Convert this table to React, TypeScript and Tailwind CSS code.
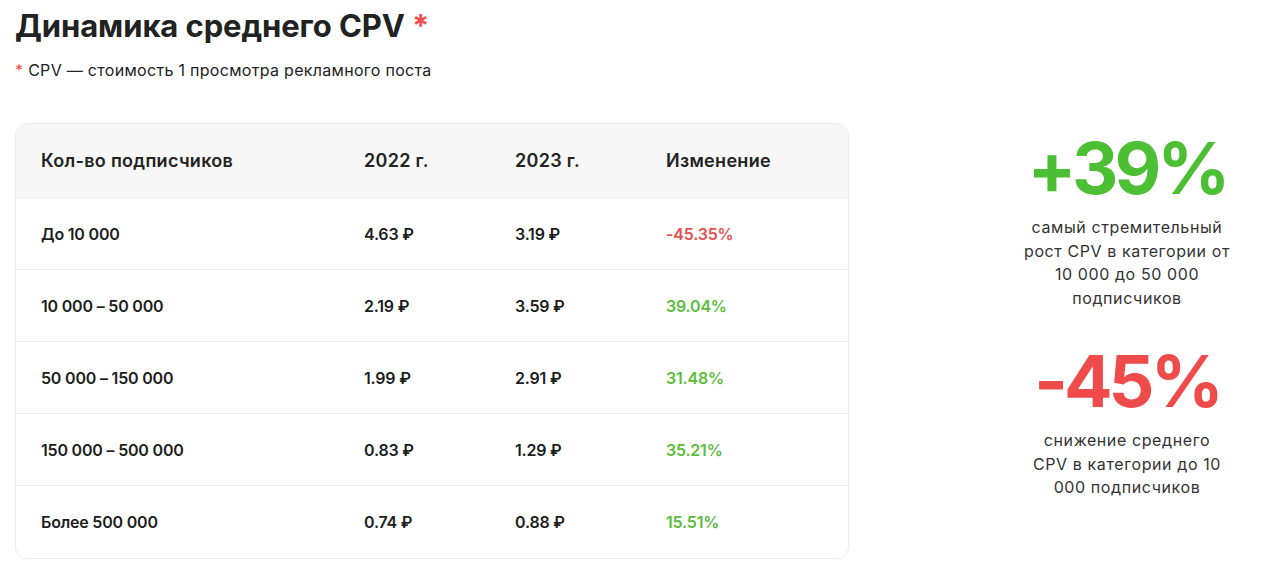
const rows = [
  { range: "До 10 000", y22: "4.63 ₽", y23: "3.19 ₽", change: "-45.35%", up: false },
  { range: "10 000 – 50 000", y22: "2.19 ₽", y23: "3.59 ₽", change: "39.04%", up: true },
  { range: "50 000 – 150 000", y22: "1.99 ₽", y23: "2.91 ₽", change: "31.48%", up: true },
  { range: "150 000 – 500 000", y22: "0.83 ₽", y23: "1.29 ₽", change: "35.21%", up: true },
  { range: "Более 500 000", y22: "0.74 ₽", y23: "0.88 ₽", change: "15.51%", up: true },
];

export default function App() {
  return (
    <div className="w-[1280px] h-[579px] bg-white text-[#222] font-['Inter',sans-serif] flex overflow-hidden">
      {/* Left: title + table */}
      <div className="pl-[15px] pt-[6px]">
        <h1 className="text-[31px] leading-[40px] font-bold tracking-[-0.1px] text-[#222]">
          Динамика среднего CPV <span className="text-[#ef4f4f]">*</span>
        </h1>
        <p className="mt-[14px] text-[16px] leading-[20px] tracking-[0.3px] text-[#222]">
          <span className="text-[#ef4f4f]">*</span> CPV — стоимость 1 просмотра рекламного поста
        </p>

        <div className="mt-[43px] w-[834px] rounded-[12px] border border-[#ededed] overflow-hidden">
          <div className="grid grid-cols-[323px_151px_151px_1fr] h-[74px] items-center bg-[#f7f7f7] border-b border-[#ececec] pl-[25px] text-[18px] font-semibold tracking-[0.3px] text-[#222]">
            <div>Кол-во подписчиков</div>
            <div>2022 г.</div>
            <div>2023 г.</div>
            <div>Изменение</div>
          </div>
          {rows.map((r, i) => (
            <div
              key={r.range}
              className={`grid grid-cols-[323px_151px_151px_1fr] h-[72px] items-center pl-[25px] text-[16px] font-semibold tracking-[-0.2px] text-[#1d1d1d] ${
                i < rows.length - 1 ? "border-b border-[#ececec]" : ""
              }`}
            >
              <div>{r.range}</div>
              <div>{r.y22}</div>
              <div>{r.y23}</div>
              <div className={r.up ? "text-[#5cbd3c]" : "text-[#e5504f]"}>{r.change}</div>
            </div>
          ))}
        </div>
      </div>

      {/* Right: highlights */}
      <div className="ml-auto mr-[28px] w-[250px] pt-[128px] flex flex-col items-center text-center">
        <div className="text-[72px] leading-[80px] font-bold tracking-[-4px] text-[#4cbf35]">+39%</div>
        <p className="mt-[8px] text-[16px] leading-[23.5px] tracking-[0.6px] text-[#333]">
          самый стремительный
          <br />
          рост CPV в категории от
          <br />
          10 000 до 50 000
          <br />
          подписчиков
        </p>
        <div className="mt-[31px] text-[72px] leading-[80px] font-bold tracking-[-4px] text-[#ef4b4b]">-45%</div>
        <p className="mt-[8px] text-[16px] leading-[23.5px] tracking-[0.6px] text-[#333]">
          снижение среднего
          <br />
          CPV в категории до 10
          <br />
          000 подписчиков
        </p>
      </div>
    </div>
  );
}
